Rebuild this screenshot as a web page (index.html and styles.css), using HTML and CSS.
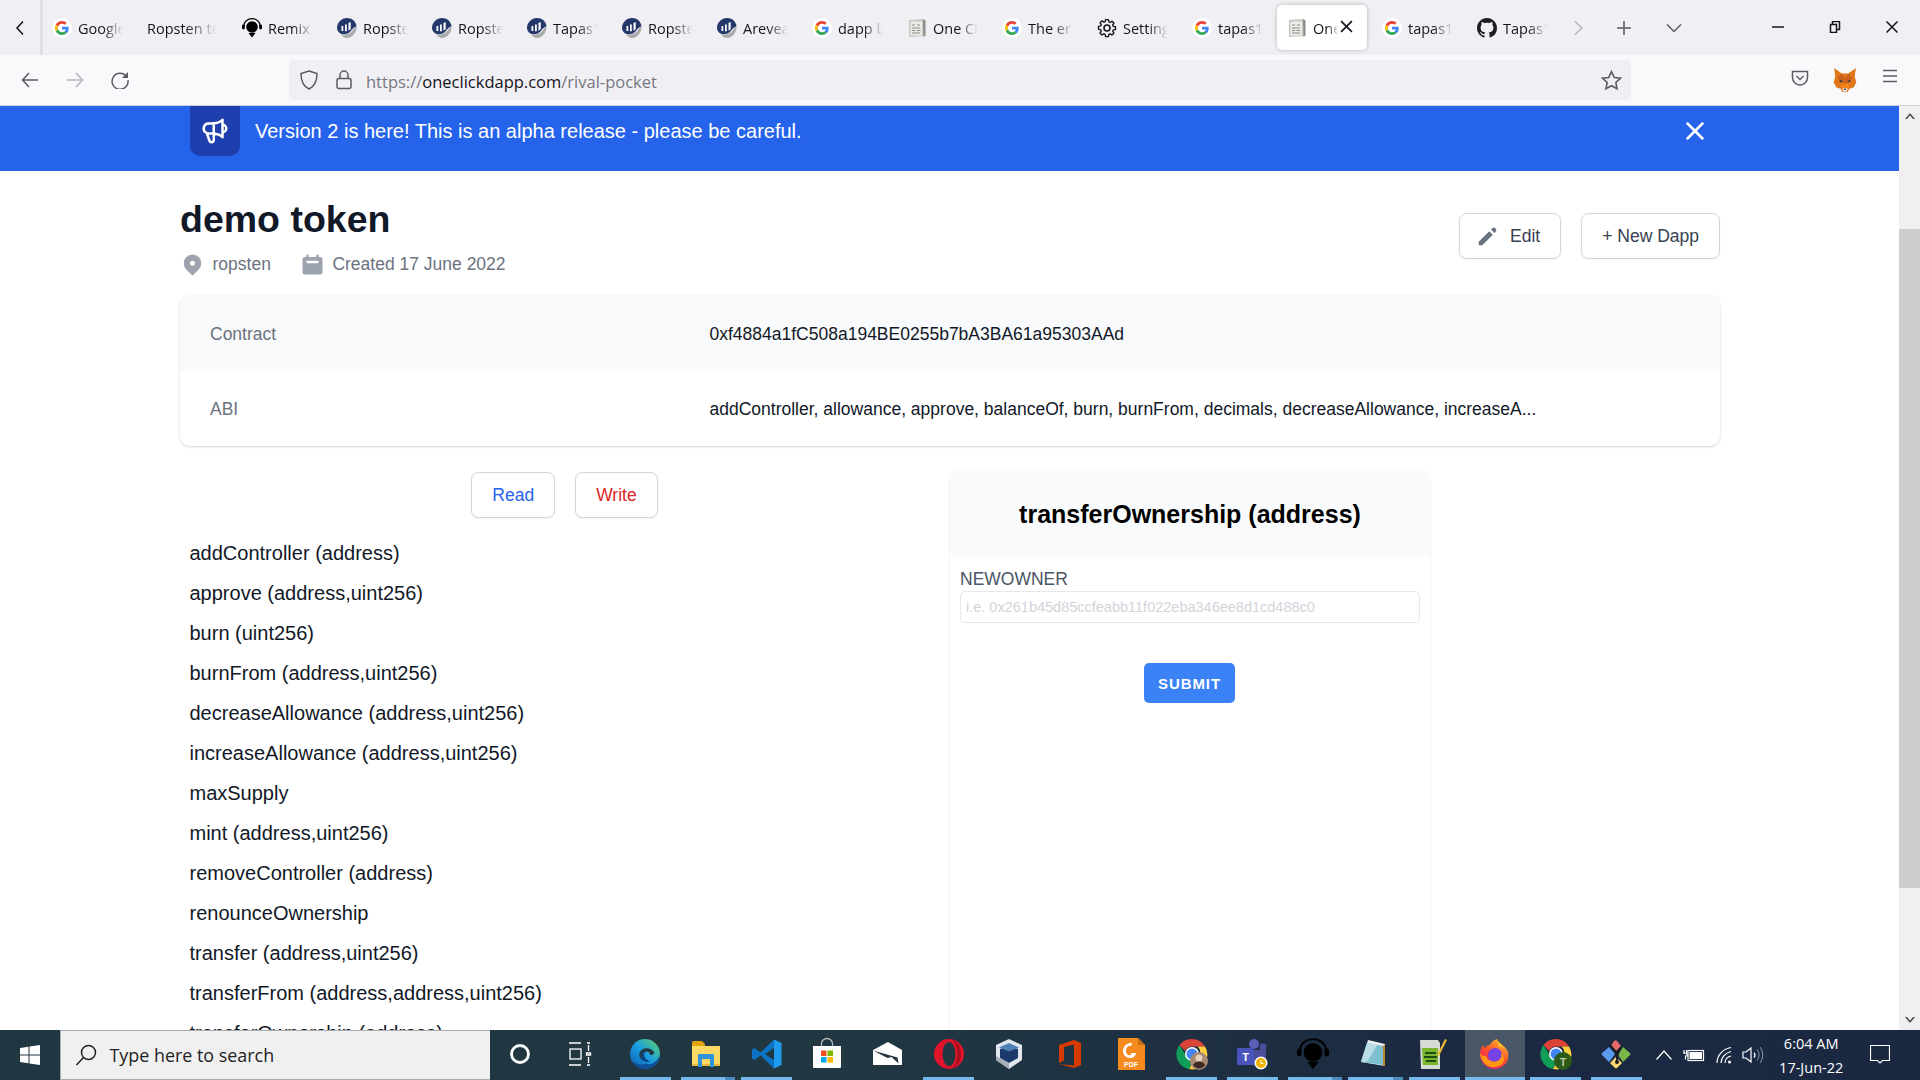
FILE: index.html
```html
<!DOCTYPE html>
<html lang="en">
<head>
<meta charset="utf-8">
<title>demo token</title>
<link rel="stylesheet" href="styles.css">
</head>
<body>
<svg class="defs" width="0" height="0" aria-hidden="true">
  <defs>
    <symbol id="i-google" viewBox="0 0 20 20">
      <circle cx="10" cy="10" r="10" fill="#fff"/>
      <g transform="translate(3 3) scale(.2917)">
        <path fill="#EA4335" d="M24 9.5c3.54 0 6.71 1.22 9.21 3.6l6.85-6.85C35.9 2.38 30.47 0 24 0 14.62 0 6.51 5.38 2.56 13.22l7.98 6.19C12.43 13.72 17.74 9.5 24 9.5z"/>
        <path fill="#4285F4" d="M46.98 24.55c0-1.57-.15-3.09-.38-4.55H24v9.02h12.94c-.58 2.96-2.26 5.48-4.78 7.18l7.73 6c4.51-4.18 7.09-10.36 7.09-17.65z"/>
        <path fill="#FBBC05" d="M10.53 28.59c-.48-1.45-.76-2.99-.76-4.59s.27-3.14.76-4.59l-7.98-6.19C.92 16.46 0 20.12 0 24c0 3.88.92 7.54 2.56 10.78l7.97-6.19z"/>
        <path fill="#34A853" d="M24 48c6.48 0 11.93-2.13 15.89-5.81l-7.73-6c-2.15 1.45-4.92 2.3-8.16 2.3-6.26 0-11.57-4.22-13.47-9.91l-7.98 6.19C6.51 42.62 14.62 48 24 48z"/>
      </g>
    </symbol>
    <symbol id="i-ropsten" viewBox="0 0 20 20">
      <path fill="#a9abad" d="M4 16c4 1.500 9.500 .5 12-4 1-1.800 2.500-3 3.500-3.500C20 14 15.500 20 10 20c-2.500 0-4.500-1.500-6-4z"/>
      <path fill="#24386b" d="M10 0c5 0 9 3.500 9.500 8.200-3 1-4.500 3.200-5.800 5C11 16.500 6 17 2.500 15 .9 13.500 0 11.800 0 10 0 4.500 4.500 0 10 0z"/>
      <path fill="#fff" d="M4.500 8h1.800v5H4.500zM8 6.500h1.800v6.800H8zM11.500 5l2.200-1v7.200l-2.200 1.600z"/>
    </symbol>
    <symbol id="i-remix" viewBox="0 0 20 20">
      <path fill="none" stroke="#000" stroke-width="1.200" d="M2 8.500V7.500a8 6.800 0 0 1 16 0v1"/>
      <rect x="0" y="6.500" width="2.800" height="5" rx="1.400"/>
      <rect x="17.200" y="6.500" width="2.800" height="5" rx="1.400"/>
      <circle cx="10" cy="9" r="5.800"/>
      <path d="M6.500 15h7L10 19.500z"/>
    </symbol>
    <symbol id="i-doc" viewBox="0 0 20 20">
      <path fill="#c9c6c2" d="M2 2l14-1 1 1v16l-15 1z"/>
      <path fill="#8e8b87" d="M16 1l2.500 1.500v15L16.500 19z"/>
      <path fill="#ecebe8" d="M3.500 3.500h11.500v14H3.500z"/>
      <path stroke="#8a8a86" stroke-width="1.200" fill="none" d="M5 7h3M10 7h3M5 10h8M5 12.500h3M9.500 12.500h4M5 15h8"/>
    </symbol>
    <symbol id="i-gear" viewBox="0 0 20 20">
      <path fill="none" stroke="#15141a" stroke-width="1.600" stroke-linejoin="round" d="M8.300 1h3.400l.5 2.600 1.600.7 2.200-1.500 2.200 2.400-1.500 2.100.7 1.600 2.600.5v3.200l-2.600.5-.7 1.600 1.500 2.200-2.400 2.200-2.100-1.500-1.600.7-.5 2.600H8.300l-.5-2.600-1.600-.7-2.200 1.500-2.200-2.400 1.500-2.100-.7-1.600L0 12.100V8.900l2.600-.5.700-1.600-1.500-2.200 2.400-2.200 2.100 1.500 1.600-.7z" transform="translate(1.500 .8) scale(.85)"/>
      <circle cx="10" cy="10" r="3" fill="none" stroke="#15141a" stroke-width="1.600"/>
    </symbol>
    <symbol id="i-github" viewBox="0 0 16 16">
      <path fill="#1b1f23" d="M8 0C3.580 0 0 3.580 0 8c0 3.540 2.290 6.530 5.470 7.590.4.070.55-.17.55-.38 0-.19-.01-.82-.01-1.490-2.010.37-2.530-.49-2.690-.94-.09-.23-.48-.94-.82-1.130-.28-.15-.68-.52-.01-.53.63-.01 1.080.58 1.230.82.72 1.210 1.870.87 2.330.66.07-.52.28-.87.51-1.070-1.780-.2-3.640-.89-3.640-3.950 0-.87.31-1.590.82-2.150-.08-.2-.36-1.020.08-2.120 0 0 .67-.21 2.200.82.64-.18 1.320-.27 2-.27s1.360.09 2 .27c1.530-1.040 2.200-.82 2.200-.82.44 1.100.16 1.920.08 2.120.51.56.82 1.270.82 2.150 0 3.070-1.870 3.750-3.650 3.950.29.25.54.73.54 1.480 0 1.070-.01 1.930-.01 2.200 0 .21.15.46.55.38A8.013 8.013 0 0016 8c0-4.420-3.580-8-8-8z"/>
    </symbol>
    <symbol id="i-chrome" viewBox="0 0 32 32">
      <path fill="#db4437" d="M16 1a15 15 0 0 1 13 7.500H16a7.500 7.500 0 0 0-6.900 4.500L3.500 7A15 15 0 0 1 16 1z"/>
      <path fill="#0f9d58" d="M3.500 7l6 10a7.500 7.500 0 0 0 8 6.300L13 31A15 15 0 0 1 3.500 7z"/>
      <path fill="#ffcd40" d="M29 8.500A15 15 0 0 1 13 31l6-9.500a7.500 7.500 0 0 0 2.500-13z"/>
      <circle cx="16" cy="16" r="7" fill="#fff"/>
      <circle cx="16" cy="16" r="5.500" fill="#4285f4"/>
    </symbol>
  </defs>
</svg>

<header class="tabbar">
  <div class="tab-scroll">
    <svg class="ic-16" viewBox="0 0 16 16"><path d="M11 1.500L5 8l6 6.500" class="st-dark"/></svg>
  </div>
  <div class="tab"><svg class="fav"><use href="#i-google"/></svg><span class="label">Google</span></div>
  <div class="tab"><span class="label label-wide">Ropsten test</span></div>
  <div class="tab"><svg class="fav"><use href="#i-remix"/></svg><span class="label">Remix - Eth</span></div>
  <div class="tab"><svg class="fav"><use href="#i-ropsten"/></svg><span class="label">Ropsten</span></div>
  <div class="tab"><svg class="fav"><use href="#i-ropsten"/></svg><span class="label">Ropsten</span></div>
  <div class="tab"><svg class="fav"><use href="#i-ropsten"/></svg><span class="label">Tapas1</span></div>
  <div class="tab"><svg class="fav"><use href="#i-ropsten"/></svg><span class="label">Ropsten</span></div>
  <div class="tab"><svg class="fav"><use href="#i-ropsten"/></svg><span class="label">Areveal</span></div>
  <div class="tab"><svg class="fav"><use href="#i-google"/></svg><span class="label">dapp b</span></div>
  <div class="tab"><svg class="fav"><use href="#i-doc"/></svg><span class="label">One Cl</span></div>
  <div class="tab"><svg class="fav"><use href="#i-google"/></svg><span class="label">The err</span></div>
  <div class="tab"><svg class="fav"><use href="#i-gear"/></svg><span class="label">Settings</span></div>
  <div class="tab"><svg class="fav"><use href="#i-google"/></svg><span class="label">tapas1</span></div>
  <div class="tab tab-active">
    <svg class="fav"><use href="#i-doc"/></svg><span class="label label-short">One C</span>
    <svg class="tab-close" viewBox="0 0 12 12"><path d="M1 1l10 10M11 1L1 11" class="st-dark"/></svg>
  </div>
  <div class="tab"><svg class="fav"><use href="#i-google"/></svg><span class="label">tapas1</span></div>
  <div class="tab"><svg class="fav"><use href="#i-github"/></svg><span class="label">Tapas1</span></div>
  <div class="tb-cell tb-more"><svg class="ic-16" viewBox="0 0 16 16"><path d="M5 1.500L12 8l-7 6.500" class="st-faint"/></svg></div>
  <div class="tb-cell tb-new"><svg class="ic-16" viewBox="0 0 16 16"><path d="M8 1v14M1 8h14" class="st-mid"/></svg></div>
  <div class="tb-cell tb-down"><svg class="ic-16" viewBox="0 0 16 16"><path d="M1 4.500l7 7 7-7" class="st-mid"/></svg></div>
  <div class="win">
    <div class="win-btn"><svg class="ic-12" viewBox="0 0 12 12"><path d="M0 6h12" class="st-dark"/></svg></div>
    <div class="win-btn"><svg class="ic-12" viewBox="0 0 12 12"><path d="M1.500 3.500h6v8h-6zM3.500 3.500V.5h7v8h-3" class="st-dark"/></svg></div>
    <div class="win-btn"><svg class="ic-12" viewBox="0 0 12 12"><path d="M.5 .5l11 11M11.500 .5l-11 11" class="st-dark"/></svg></div>
  </div>
</header>

<nav class="toolbar">
  <div class="nav-btn"><svg class="ic-18" viewBox="0 0 18 18"><path d="M17 9H1.500M8 2L1.500 9 8 16" class="st-mid"/></svg></div>
  <div class="nav-btn"><svg class="ic-18" viewBox="0 0 18 18"><path d="M1 9h15.500M10 2l6.500 7-6.500 7" class="st-faint"/></svg></div>
  <div class="nav-btn nav-reload"><svg class="ic-18" viewBox="0 0 18 18"><path d="M15.500 5.500A8 8 0 1 0 17 9" class="st-mid"/><path d="M17 1v6h-6z" class="fl-mid"/></svg></div>
  <div class="urlbar">
    <svg class="ic-shield" viewBox="0 0 18 20"><path d="M9 1l8 2.500c0 7-1.500 12.500-8 15.500C2.500 16 1 10.500 1 3.500z" class="st-mid"/></svg>
    <svg class="ic-lock" viewBox="0 0 16 20"><rect x="1" y="8.500" width="14" height="10" rx="2" class="st-mid"/><path d="M4 8.500V5a4 4 0 0 1 8 0v3.500" class="st-mid"/></svg>
    <span class="url"><span class="url-dim">https://</span>oneclickdapp.com<span class="url-dim">/rival-pocket</span></span>
    <svg class="ic-star" viewBox="0 0 20 20"><path d="M10 1.500l2.600 5.600 6 .7-4.500 4.100 1.200 6L10 15l-5.300 2.900 1.200-6L1.400 7.800l6-.7z" class="st-mid"/></svg>
  </div>
  <div class="tool-icons">
    <div class="tool-btn"><svg class="ic-18 ic-pocket" viewBox="0 0 18 18"><path d="M1.500 2.500h15v6a7.500 7.500 0 0 1-15 0z" class="st-mid"/><path d="M5.500 7L9 10.500 12.500 7" class="st-mid"/></svg></div>
    <div class="tool-btn">
      <svg class="ic-fox" viewBox="0 0 22 24">
        <path fill="#e2761b" d="M1 1l7 5h6l7-5-1 8 1.500 5-2.500 5-4 1-1.500 3h-5L7 20l-4-1-2.500-5L2 9z"/>
        <path fill="#c9621a" d="M8 6l3 5 3-5 4 4-3 4-4 1-4-1-3-4z"/>
        <path fill="#233447" d="M6 12l3 1-2.500 1.200zM16 12l-3 1 2.500 1.200z"/>
        <path fill="#f6851b" d="M7 15l4 1 4-1-1 4.500h-6z"/>
        <path fill="#e4ebf2" d="M8.500 19.500h5l-.8 3h-3.400z"/>
        <path fill="#161616" d="M10 20h2l-.5 1.200h-1z"/>
      </svg>
    </div>
    <div class="tool-btn tool-menu"><svg class="ic-18" viewBox="0 0 18 18"><path d="M2 3.500h14M2 9h14M2 14.500h14" class="st-mid"/></svg></div>
  </div>
</nav>

<div class="viewport">
  <main class="page">
    <section class="banner">
      <div class="banner-icon">
        <svg class="ic-30" viewBox="0 0 24 24" fill="none" stroke="#fff" stroke-width="2" stroke-linecap="round" stroke-linejoin="round"><path d="M11 5.882V19.240a1.760 1.760 0 01-3.417.592l-2.147-6.150M18 13a3 3 0 100-6M5.436 13.683A4.001 4.001 0 017 6h1.832c4.100 0 7.625-1.234 9.168-3v14c-1.543-1.766-5.067-3-9.168-3H7a3.988 3.988 0 01-1.564-.317z"/></svg>
      </div>
      <p class="banner-text">Version 2 is here! This is an alpha release - please be careful.</p>
      <svg class="ic-30 banner-close" viewBox="0 0 24 24" fill="none" stroke="#fff" stroke-width="2" stroke-linecap="round" stroke-linejoin="round"><path d="M6 18L18 6M6 6l12 12"/></svg>
    </section>

    <div class="container">
      <div class="head">
        <div class="head-text">
          <h1 class="title">demo token</h1>
          <div class="meta">
            <span class="meta-item"><svg class="ic-25 ic-gray" viewBox="0 0 20 20"><path fill-rule="evenodd" d="M5.050 4.050a7 7 0 119.900 9.900L10 18.900l-4.950-4.950a7 7 0 010-9.900zM10 11a2 2 0 100-4 2 2 0 000 4z"/></svg>ropsten</span>
            <span class="meta-item"><svg class="ic-25 ic-gray" viewBox="0 0 20 20"><path fill-rule="evenodd" d="M6 2a1 1 0 00-1 1v1H4a2 2 0 00-2 2v10a2 2 0 002 2h12a2 2 0 002-2V6a2 2 0 00-2-2h-1V3a1 1 0 10-2 0v1H7V3a1 1 0 00-1-1zm0 5a1 1 0 000 2h8a1 1 0 100-2H6z"/></svg>Created 17 June 2022</span>
          </div>
        </div>
        <div class="head-actions">
          <button class="btn btn-edit"><svg class="ic-25 ic-darkgray" viewBox="0 0 20 20"><path d="M13.586 3.586a2 2 0 112.828 2.828l-.793.793-2.828-2.828.793-.793zM11.379 5.793L3 14.172V17h2.828l8.380-8.379-2.830-2.828z"/></svg>Edit</button>
          <button class="btn btn-new">+ New Dapp</button>
        </div>
      </div>

      <dl class="info">
        <div class="info-row info-shade"><dt>Contract</dt><dd>0xf4884a1fC508a194BE0255b7bA3BA61a95303AAd</dd></div>
        <div class="info-row info-plain"><dt>ABI</dt><dd>addController, allowance, approve, balanceOf, burn, burnFrom, decimals, decreaseAllowance, increaseA...</dd></div>
      </dl>

      <div class="split">
        <div class="left">
          <div class="modes">
            <button class="btn btn-read">Read</button>
            <button class="btn btn-write">Write</button>
          </div>
          <ul class="fns">
            <li>addController (address)</li>
            <li>approve (address,uint256)</li>
            <li>burn (uint256)</li>
            <li>burnFrom (address,uint256)</li>
            <li>decreaseAllowance (address,uint256)</li>
            <li>increaseAllowance (address,uint256)</li>
            <li>maxSupply</li>
            <li>mint (address,uint256)</li>
            <li>removeController (address)</li>
            <li>renounceOwnership</li>
            <li>transfer (address,uint256)</li>
            <li>transferFrom (address,address,uint256)</li>
            <li>transferOwnership (address)</li>
          </ul>
        </div>
        <section class="form-card">
          <h2 class="form-title">transferOwnership (address)</h2>
          <div class="form-body">
            <label class="form-label" for="newowner">NEWOWNER</label>
            <input class="form-input" id="newowner" placeholder="i.e. 0x261b45d85ccfeabb11f022eba346ee8d1cd488c0">
            <button class="submit">SUBMIT</button>
          </div>
        </section>
      </div>
    </div>
  </main>
  <aside class="scrollbar">
    <svg class="sb-arrow" viewBox="0 0 10 6"><path d="M0 6l5-6 5 6-2 0-3-3.500L2 6z" fill="#505050"/></svg>
    <div class="sb-thumb"></div>
    <svg class="sb-arrow sb-arrow-down" viewBox="0 0 10 6"><path d="M0 0l5 6 5-6-2 0-3 3.500L2 0z" fill="#505050"/></svg>
  </aside>
</div>

<footer class="taskbar">
  <div class="start"><svg class="ic-20" viewBox="0 0 20 20"><path fill="#fff" d="M0 3l8.500-1.200v7.700H0zM9.500 1.600L20 0v9.500H9.500zM0 10.500h8.500v7.700L0 17zM9.500 10.500H20V20L9.500 18.400z"/></svg></div>
  <div class="search">
    <svg class="ic-search" viewBox="0 0 22 22"><circle cx="13.500" cy="8.500" r="7" fill="none" stroke="#222" stroke-width="1.500"/><path d="M8.500 13.500L1.500 21" stroke="#222" stroke-width="1.500"/></svg>
    <span>Type here to search</span>
  </div>
  <div class="tk tk-plain"><svg class="tk-svg" viewBox="0 0 32 32"><circle cx="16" cy="16" r="8.500" fill="none" stroke="#fff" stroke-width="2.800"/></svg></div>
  <div class="tk tk-plain tk-view"><svg class="tk-svg" viewBox="0 0 32 32" fill="none" stroke="#fff" stroke-width="1.300"><path d="M6 5h12M6 27h12M24 5h3M24 27h3M25.500 7v6M25.500 19v6"/><rect x="7" y="11" width="11" height="10"/><path d="M23.500 15h4v2h-4z"/></svg></div>

  <div class="tk tk-on">
    <svg class="tk-svg" viewBox="0 0 32 32">
      <defs><linearGradient id="edge" x1="0" y1="1" x2="1" y2="0"><stop offset="0" stop-color="#0c59a4"/><stop offset=".5" stop-color="#1b9de2"/><stop offset="1" stop-color="#5fd66a"/></linearGradient></defs>
      <circle cx="16" cy="16" r="15" fill="url(#edge)"/>
      <path fill="#0f4f9a" d="M31 17c-1 8-7 14-15 14-6 0-11-3.500-13-9 2 3 6 5 10 4.500 3-.4 4-1 5.500-.5 3 1 9-1.500 12.500-9z"/>
      <path fill="#213742" d="M12 21c-3-3-2-8 2-10 4-2 9 0 11 3 1 1.500-1 3-4 3 0-3-3-5-6-3.500-2.500 1.300-2 4.500-3 7.500z"/>
      <path fill="#0a3f80" d="M12 21c1-3 .5-6.200 3-7.500 1.500-.7 3-.5 4 .3-4-.3-5 3-3 6 1 1.600 3 3.200 6 3.700-4 1-8 0-10-2.500z"/>
    </svg>
  </div>
  <div class="tk tk-on tk-stack">
    <svg class="tk-svg" viewBox="0 0 32 32">
      <path fill="#e3a30c" d="M2 5a2 2 0 0 1 2-2h8l3 3v3H2z"/>
      <path fill="#fcd965" d="M2 8h28v19a1 1 0 0 1-1 1H3a1 1 0 0 1-1-1z"/>
      <path fill="#e8b93f" d="M2 26h28v2H2z"/>
      <path fill="#2f93dc" d="M8 17a1 1 0 0 1 1-1h14a1 1 0 0 1 1 1v12h-4v-8h-8v8H8z"/>
    </svg>
  </div>
  <div class="tk tk-on">
    <svg class="tk-svg" viewBox="0 0 32 32">
      <path fill="#0c72c4" d="M23 1.500L9.500 14.500 3.500 10 1 11.500v9L3.500 22l6-4.500L23 30.500V22l-9-6 9-6z"/>
      <path fill="#1f9cf0" d="M23 1.500l7.500 3.500v22L23 30.500z"/>
    </svg>
  </div>
  <div class="tk">
    <svg class="tk-svg" viewBox="0 0 32 32">
      <path fill="none" stroke="#b8bcbf" stroke-width="1.300" d="M10.500 9V5.500a5.500 5 0 0 1 11 0V9"/>
      <path fill="#fff" d="M2 8h28v21a1 1 0 0 1-1 1H3a1 1 0 0 1-1-1z"/>
      <path fill="#f25022" d="M10 12.500h5.500V18H10z"/><path fill="#7fba00" d="M16.500 12.500H22V18h-5.500z"/><path fill="#00a4ef" d="M10 19h5.500v5.500H10z"/><path fill="#ffb900" d="M16.500 19H22v5.500h-5.500z"/>
    </svg>
  </div>
  <div class="tk">
    <svg class="tk-svg" viewBox="0 0 32 32">
      <path fill="#fff" d="M16 4L30 12v15H1V12z"/>
      <path fill="#213742" d="M1 12.500l24.500 7 1 6-7-6.500-4 1z"/>
    </svg>
  </div>
  <div class="tk tk-on">
    <svg class="tk-svg" viewBox="0 0 32 32">
      <circle cx="16" cy="16" r="15" fill="#e0142a"/>
      <ellipse cx="16" cy="16" rx="6.500" ry="12" fill="#213742"/>
      <path fill="#a60d1f" d="M19 2c3.500 2.500 5.500 7.500 5.500 14S22.500 27.500 19 30c4-.5 9-6 9-14S23 2.500 19 2z"/>
    </svg>
  </div>
  <div class="tk">
    <svg class="tk-svg" viewBox="0 0 32 32">
      <path fill="#dfe6ee" d="M16 1L29 7v15L16 31 3 22V7z"/>
      <path fill="#1b3a6b" d="M16 8L25 11v9l-9 5-9-5v-9z"/>
      <path fill="#4d7eb5" d="M16 5L26 9.500l-10 4-10-4z"/>
      <path fill="#a6adb5" d="M16 25v6l-13-9v-4z"/>
    </svg>
  </div>
  <div class="tk">
    <svg class="tk-svg" viewBox="0 0 32 32">
      <path fill="#d83b01" d="M5 7L20 2l7 3v22l-7 3-15-4 15 1.500V6.500L10 9v13.500L5 25z"/>
    </svg>
  </div>
  <div class="tk">
    <svg class="tk-svg" viewBox="0 0 32 32">
      <path fill="#f58a1f" d="M3 0h20l7 7v25H3z"/>
      <path fill="#c96f14" d="M23 0l7 7h-7z"/>
      <path fill="#fff" d="M16 5c-5 0-8 4-8 8s3 7 7 7c3 0 6-2 6-5h-5v2c-3 1-5-1-5-4s2-6 5-5l1-3z"/>
      <text class="pdf-txt" x="16" y="29">PDF</text>
    </svg>
  </div>
  <div class="tk tk-on">
    <svg class="tk-svg tk-over" viewBox="0 0 32 32">
      <use href="#i-chrome"/>
      <circle cx="23" cy="23" r="9" fill="#a88a72"/>
      <circle cx="23" cy="20" r="3.500" fill="#e4d2c0"/>
      <path fill="#3c2a25" d="M17 27c2-4 9-5 12 0-2 4-9 5-12 0z"/>
    </svg>
  </div>
  <div class="tk tk-on">
    <svg class="tk-svg" viewBox="0 0 32 32">
      <circle cx="18" cy="6" r="5" fill="#5c5fb8"/><circle cx="27" cy="9" r="3.500" fill="#4a4d9c"/>
      <path fill="#4a4d9c" d="M14 12h16v11a7 7 0 0 1-14 0z"/>
      <rect x="1" y="10" width="17" height="17" rx="1.500" fill="#4b53bc"/>
      <text class="teams-txt" x="9.500" y="23">T</text>
      <circle cx="25" cy="25" r="6.500" fill="#fff"/><circle cx="25" cy="25" r="5" fill="#f0b400"/>
      <path d="M25 22v3.500h2.500" fill="none" stroke="#fff" stroke-width="1"/>
    </svg>
  </div>
  <div class="tk tk-on tk-stack">
    <svg class="tk-svg" viewBox="0 0 32 32"><use href="#i-remix"/></svg>
  </div>
  <div class="tk tk-on tk-stack">
    <svg class="tk-svg" viewBox="0 0 32 32">
      <path fill="#e9eef0" d="M10 2l17 4v22L3 24z"/>
      <path fill="#7fc0d0" d="M9 5l16 3v19L3 24z"/>
      <path fill="#b8dde4" d="M9 5l10 2-9 16-7 1z"/>
      <path fill="#b5862f" d="M25 8l2-1.500V28h-2z"/>
    </svg>
  </div>
  <div class="tk tk-on">
    <svg class="tk-svg" viewBox="0 0 32 32">
      <path fill="#d6dcd4" d="M2 2h18l2 3v26H3z"/>
      <path fill="#7ab52d" d="M4 10h16v17H5z"/>
      <path fill="#1d4d12" d="M7 14h11v2H7zM6 18h13v2H6zM8 22h10v2H8z"/>
      <path fill="#e8b92e" d="M27 1l2 1-8 16-2-1z"/>
    </svg>
  </div>
  <div class="tk tk-on tk-active">
    <svg class="tk-svg" viewBox="0 0 32 32">
      <defs><linearGradient id="fx" x1=".2" y1="1" x2=".8" y2="0"><stop offset="0" stop-color="#e31587"/><stop offset=".5" stop-color="#ff4f2a"/><stop offset="1" stop-color="#ffbd2e"/></linearGradient></defs>
      <path fill="url(#fx)" d="M18 1c1 4 8 6 11 13 2 8-4 17-13 17S1 24 1 16c0-4 1.500-7 3-9l1.500 3C7 8 9 7 11 7c1-3 4-5 7-6z"/>
      <circle cx="16" cy="17" r="7" fill="#7542e5"/>
      <path fill="#ff980e" d="M1 14c1 4 3 4 6 4 2 6 9 7 13 4 2-1.500 3-4 2-7 4 3 4 9 0 12-5 3-12 3-16-1-3-3-5-7-5-12z"/>
      <path fill="#ffca2e" d="M18 1c1 4 6 6 8 10-2-2-5-3-7-2 1-3 0-5-1-8z"/>
    </svg>
  </div>
  <div class="tk tk-on">
    <svg class="tk-svg tk-over" viewBox="0 0 32 32">
      <use href="#i-chrome"/>
      <circle cx="23" cy="23" r="9" fill="#2c5a17"/>
      <text class="t-txt" x="23" y="27.500">T</text>
    </svg>
  </div>
  <div class="tk tk-on">
    <svg class="tk-svg" viewBox="0 0 32 32">
      <path fill="#e8696b" d="M14 3a2 2 0 0 1 3 0l4 5-5 5-5-5z"/>
      <path fill="#7ab648" d="M23 9l7 6a1.500 1.500 0 0 1 0 2l-7 7-5-7z"/>
      <path fill="#f5d76e" d="M16 19l6 6-5 5a1.500 1.500 0 0 1-2 0l-5-5z"/>
      <path fill="#5b9cf0" d="M9 9l6 7-6 8-7-7a1.500 1.500 0 0 1 0-2z"/>
      <path d="M10 7l8 9M21 9l-4 7v8" stroke="#1b1b1b" stroke-width="1.800" fill="none"/>
      <circle cx="17" cy="16" r="2" fill="#1b1b1b"/><circle cx="17" cy="24" r="2" fill="#1b1b1b"/>
    </svg>
  </div>

  <div class="tray">
    <svg class="tr-chev" viewBox="0 0 16 10"><path d="M.5 9.500L8 1l7.500 8.500" class="st-white"/></svg>
    <svg class="tr-bat" viewBox="0 0 22 14"><path d="M1 2v4M3.500 2v4M.5 5h3.500v3H2.500v3.500" class="st-white"/><rect x="5" y="2.500" width="15.500" height="10" class="st-white"/><rect x="6.500" y="4" width="12.500" height="7" fill="#fff"/></svg>
    <svg class="tr-wifi" viewBox="0 0 20 18"><path d="M1 17C1 9 7 3 15 1.500M5 17c0-5 4-10 10-11.500M9 17c0-3 2-6 6-7" class="st-white"/><circle cx="13.500" cy="16" r="1.500" fill="#fff"/></svg>
    <svg class="tr-vol" viewBox="0 0 22 18"><path d="M1 6h3l5-4v14l-5-4H1z" class="st-white"/><path d="M12 6.500a4 4 0 0 1 0 5" class="st-white"/><path d="M15 3.500a9 9 0 0 1 0 11" class="st-soft"/><path d="M18 1a13 13 0 0 1 0 16" class="st-soft"/></svg>
    <div class="clock"><span>6:04 AM</span><span>17-Jun-22</span></div>
    <svg class="tr-note" viewBox="0 0 20 20"><path d="M.5 .5h19v15h-7L10 18l-2.500-2.500h-7z" class="st-white"/></svg>
  </div>
</footer>
</body>
</html>
```
FILE: styles.css
```css
* { box-sizing: border-box; }
html, body { margin: 0; height: 100%; }
body {
  width: 1920px;
  height: 1080px;
  overflow: hidden;
  display: flex;
  flex-direction: column;
  font-family: "Liberation Sans", Arial, sans-serif;
  background: #fff;
  color: #111827;
}
.defs { position: absolute; }

svg { flex: none; display: block; }
.st-dark, .st-mid, .st-faint, .st-white, .st-soft { fill: none; stroke-width: 1.5; }
.st-dark { stroke: #15141a; }
.st-mid { stroke: #5b5b66; }
.st-faint { stroke: #b4b4ba; }
.st-white { stroke: #fff; stroke-width: 1.2; }
.st-soft { stroke: #8b97aa; stroke-width: 1; }
.fl-mid { fill: #5b5b66; }
.ic-12 { width: 12px; height: 12px; }
.ic-16 { width: 16px; height: 16px; }
.ic-18 { width: 18px; height: 18px; }
.ic-20 { width: 20px; height: 20px; }
.ic-25 { width: 25px; height: 25px; }
.ic-30 { width: 30px; height: 30px; }
.ic-gray { fill: #9ca3af; margin-right: 7.5px; }
.ic-darkgray { fill: #6b7280; margin-right: 10px; }

/* tab strip */
.tabbar {
  flex: none;
  height: 55px;
  display: flex;
  background: #f0f0f4;
  font-family: "Open Sans", "Noto Sans", sans-serif;
  font-size: 14.5px;
  color: #15141a;
}
.tab-scroll {
  width: 40px;
  display: flex;
  align-items: center;
  justify-content: center;
  box-shadow: 3px 0 0 #e0e0e4;
}
.tab {
  width: 95px;
  padding-left: 12px;
  display: flex;
  align-items: center;
  gap: 6px;
}
.fav { width: 20px; height: 20px; }
.label {
  width: 45px;
  padding-top: 2px;
  white-space: nowrap;
  overflow: hidden;
  -webkit-mask-image: linear-gradient(to right, #000 55%, transparent 100%);
  mask-image: linear-gradient(to right, #000 55%, transparent 100%);
}
.label-wide { width: 70px; }
.label-short { width: 26px; }
.tab-active {
  width: 90px;
  height: 45px;
  margin: 5px 3px 0 2px;
  padding-left: 10px;
  background: #fff;
  border-radius: 5px;
  box-shadow: 0 0 4px rgba(0, 0, 0, .25);
}
.tab-close { width: 13px; height: 13px; margin-left: -5px; margin-bottom: 2px; }
.tb-cell { display: flex; align-items: center; justify-content: center; }
.tb-more { width: 36px; }
.tb-new { width: 55px; }
.tb-down { width: 46px; }
.win { margin-left: auto; display: flex; }
.win-btn {
  width: 57px;
  display: flex;
  align-items: center;
  justify-content: center;
  padding-bottom: 2px;
}

/* toolbar */
.toolbar {
  flex: none;
  height: 51px;
  display: flex;
  align-items: center;
  padding: 0 6px 0;
  background: #f9f9fb;
  border-bottom: 1px solid #cfcfd8;
  font-family: "Open Sans", "Noto Sans", sans-serif;
}
.nav-btn { width: 46px; display: flex; justify-content: center; }
.nav-btn:first-child { padding-left: 1px; }
.nav-reload { padding-right: 2px; }
.urlbar {
  margin-left: 145px;
  width: 1342px;
  height: 40px;
  display: flex;
  align-items: center;
  padding: 0 9px 0 11px;
  background: #f0f0f4;
  border-radius: 5px;
}
.ic-shield { width: 18px; height: 20px; }
.ic-lock { width: 16px; height: 20px; margin-left: 18px; }
.url { margin: 3px 0 0 14px; font-size: 16.5px; color: #15141a; white-space: nowrap; }
.url-dim { color: #77777f; }
.ic-star { width: 21px; height: 21px; margin-left: auto; }
.tool-icons { margin-left: auto; display: flex; }
.tool-btn { width: 45.6px; display: flex; justify-content: center; padding-right: 1px; }
.tool-menu { padding-right: 3px; }
.ic-pocket { margin-top: 2px; }
.ic-fox { width: 24px; height: 26px; }

/* page */
.viewport { flex: 1; min-height: 0; display: flex; }
.page { flex: 1; min-width: 0; overflow: hidden; }
.banner {
  height: 65px;
  display: flex;
  align-items: flex-start;
  padding: 0 189px 0 190px;
  background: #2563eb;
  color: #fff;
}
.banner-icon {
  width: 50px;
  height: 50px;
  display: flex;
  align-items: center;
  justify-content: center;
  background: #1e40af;
  border-radius: 0 0 10px 10px;
}
.banner-text { margin: 0 0 0 15px; font-size: 20px; line-height: 50px; }
.banner-close { margin: 10px 0 0 auto; }

.container { width: 1540px; margin-left: 180px; }
.head {
  height: 78px;
  margin-top: 26px;
  display: flex;
  align-items: center;
  justify-content: space-between;
}
.head-text { padding-top: 2px; }
.title { margin: 0; font-size: 37.5px; line-height: 45px; font-weight: 700; color: #111827; }
.meta { margin-top: 10px; display: flex; gap: 29px; font-size: 17.5px; line-height: 25px; color: #6b7280; }
.meta-item { display: flex; align-items: center; }
.head-actions { display: flex; gap: 20px; }
.btn {
  height: 46px;
  display: flex;
  align-items: center;
  padding: 0 20px;
  border: 1px solid #d1d5db;
  border-radius: 7.5px;
  background: #fff;
  box-shadow: 0 1px 2px rgba(0, 0, 0, .05);
  font: 17.5px "Liberation Sans", Arial, sans-serif;
  color: #374151;
}
.btn-edit { padding-left: 15px; }

.info {
  margin: 20px 0 0;
  border-radius: 10px;
  background: #fff;
  box-shadow: 0 1px 3px rgba(0, 0, 0, .12), 0 1px 2px rgba(0, 0, 0, .06);
  overflow: hidden;
  font-size: 17.5px;
  line-height: 25px;
}
.info-row { display: flex; padding: 0 30px; }
.info-shade { background: #f9fafb; padding-top: 27px; padding-bottom: 24px; }
.info-plain { padding-top: 26px; padding-bottom: 24px; }
.info-row dt { width: 499.5px; color: #6b7280; }
.info-row dd { margin: 0; color: #111827; }

.split { display: flex; margin-top: 24px; }
.left { width: 770px; padding-top: 2px; }
.modes { display: flex; justify-content: center; gap: 20px; padding-right: 1px; }
.btn-read { color: #2563eb; }
.btn-write { color: #dc2626; }
.fns { list-style: none; margin: 15px 0 0; padding: 0 0 0 9.5px; font-size: 20px; line-height: 40px; color: #111827; }

.form-card {
  width: 480px;
  height: 700px;
  border-radius: 10px;
  background: #fff;
  box-shadow: 0 1px 3px rgba(0, 0, 0, .1);
  overflow: hidden;
}
.form-title {
  margin: 0;
  height: 86px;
  padding-top: 3px;
  display: flex;
  align-items: center;
  justify-content: center;
  background: #f9fafb;
  font-size: 25px;
  font-weight: 700;
  color: #000;
}
.form-body { display: flex; flex-direction: column; padding: 11px 10px 0 10px; }
.form-label { font-size: 17.5px; line-height: 24px; color: #4b5563; }
.form-input {
  height: 32px;
  width: 100%;
  padding: 0 5px;
  border: 1px solid #e5e7eb;
  border-radius: 5px;
  outline: none;
  font: 14.5px "Liberation Sans", Arial, sans-serif;
}
.form-input::placeholder { color: #d1d5db; opacity: 1; }
.submit {
  align-self: center;
  width: 91px;
  height: 40px;
  margin: 40px 1px 0 0;
  border: 0;
  border-radius: 5px;
  background: #3b82f6;
  color: #fff;
  font: 700 15px "Liberation Sans", Arial, sans-serif;
  letter-spacing: .9px;
}

/* scrollbar */
.scrollbar {
  width: 21px;
  display: flex;
  flex-direction: column;
  align-items: center;
  background: #f0f0f0;
}
.sb-arrow { width: 10px; height: 6px; margin: 7px 0 0; }
.sb-thumb { width: 21px; height: 659px; margin-top: 110px; background: #cdcdcd; }
.sb-arrow-down { margin: auto 0 7px; }

/* taskbar */
.taskbar {
  flex: none;
  height: 50px;
  display: flex;
  background: linear-gradient(to right, #203742 0%, #213742 45%, #1b2a42 75%, #1a2842 100%);
  font-family: "Open Sans", "Noto Sans", sans-serif;
}
.start { width: 60px; display: flex; align-items: center; justify-content: center; }
.search {
  width: 430px;
  display: flex;
  align-items: center;
  padding-left: 13.5px;
  background: #f0f0f0;
  border: 1px solid #a8adb0;
  border-width: 1px 0 1px 1px;
  font-size: 17.9px;
  color: #222;
}
.ic-search { width: 22px; height: 22px; margin-right: 13px; }
.tk {
  width: 60.7px;
  display: flex;
  align-items: center;
  justify-content: center;
  padding-bottom: 3px;
  position: relative;
}
.tk-plain { width: 60px; }
.tk-view { margin-right: 5px; padding-right: 2px; }
.tk-svg { width: 32px; height: 32px; overflow: visible; }
.tk-on::after {
  content: "";
  position: absolute;
  left: 5px;
  right: 5px;
  bottom: 0;
  height: 3px;
  background: #76b9ed;
}
.tk-stack::before {
  content: "";
  position: absolute;
  right: 1px;
  bottom: 0;
  width: 10px;
  height: 3px;
  background: #4d8cbf;
  z-index: 1;
}
.tk-active { background: #4a5766; }
.tk-active::after { left: 0; right: 0; }
.pdf-txt { font: 700 7px "Liberation Sans", sans-serif; fill: #fff; text-anchor: middle; }
.teams-txt { font: 700 11px "Liberation Sans", sans-serif; fill: #fff; text-anchor: middle; }
.t-txt { font: 700 11px "Liberation Sans", sans-serif; fill: #b9c9a8; text-anchor: middle; }
.tray { flex: 1; display: flex; align-items: center; color: #fff; padding-left: 9px; }
.tr-chev { width: 16px; height: 10px; }
.tr-bat { width: 22px; height: 14px; margin-left: 11px; }
.tr-wifi { width: 20px; height: 18px; margin-left: 11px; }
.tr-vol { width: 22px; height: 18px; margin-left: 6.5px; }
.clock {
  width: 72px;
  margin-left: 11px;
  display: flex;
  flex-direction: column;
  align-items: center;
  gap: 5px;
  font-size: 14.5px;
  line-height: 19px;
}
.tr-note { width: 20px; height: 20px; margin-left: 22.7px; }
```
